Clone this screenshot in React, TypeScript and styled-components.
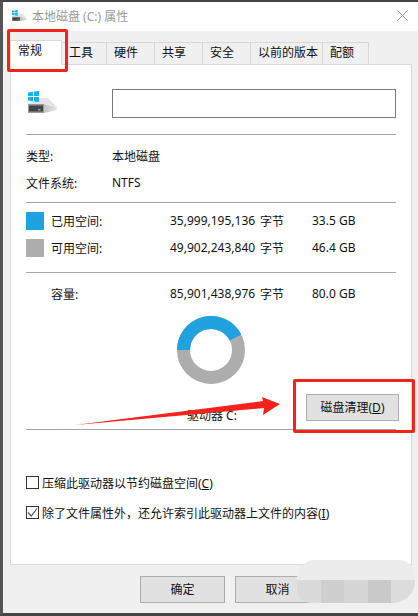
import React from 'react';
import styled, {createGlobalStyle} from 'styled-components';

const GlobalStyle = createGlobalStyle`
  html, body {
    margin: 0;
    padding: 0;
    background: #f0f0f0;
  }
  * {
    box-sizing: border-box;
  }
`;

const tabs = [
    {label: '常规', width: 52},
    {label: '工具', width: 45},
    {label: '硬件', width: 48},
    {label: '共享', width: 48},
    {label: '安全', width: 48},
    {label: '以前的版本', width: 72},
    {label: '配额', width: 46},
];

const DriveIcon = ({size = 29}: {size?: number}) => (
    <svg width={size} height={size * 22 / 29} viewBox="0 0 29 22">
        <defs>
            <linearGradient id="driveSide" x1="0" y1="0" x2="1" y2="0">
                <stop offset="0" stopColor="#c4c4c4"/>
                <stop offset="1" stopColor="#e6e6e6"/>
            </linearGradient>
        </defs>
        <path d="M16 13 L29 16 L29 19 L16 22 Z" fill="url(#driveSide)"/>
        <path d="M0 13 L7 7 L20 7 L29 16 L16 13 Z" fill="#e4e4e4"/>
        <rect x="0" y="13" width="16" height="9" fill="#9a9a9a"/>
        <rect x="1" y="14.5" width="14" height="6" fill="#454545"/>
        <rect x="10" y="18" width="2.5" height="1.5" fill="#5cc46c"/>
        <path d="M0 1.5 L5 0.8 L5 5 L0 5 Z" fill="#1bb0ef"/>
        <path d="M6 0.6 L11 0 L11 5 L6 5 Z" fill="#1bb0ef"/>
        <path d="M0 6 L5 6 L5 10.2 L0 9.6 Z" fill="#1bb0ef"/>
        <path d="M6 6 L11 6 L11 11 L6 10.4 Z" fill="#1bb0ef"/>
    </svg>
);

const Donut = () => (
    <svg width="68" height="68" viewBox="0 0 68 68">
        <circle cx="34" cy="34" r="27.5" fill="none" stroke="#adadad" strokeWidth="13"/>
        <path d="M6.5 34 A27.5 27.5 0 0 1 58.5 21.5" fill="none" stroke="#1fa2dd" strokeWidth="13"/>
    </svg>
);

const App = () => {
    return <Window>
        <GlobalStyle/>
        <TitleBar>
            <DriveIcon size={15}/>
            <TitleText>本地磁盘 (C:) 属性</TitleText>
            <CloseIcon viewBox="0 0 11 11"><path d="M0.5 0.5 L10.5 10.5 M10.5 0.5 L0.5 10.5"/></CloseIcon>
        </TitleBar>

        <TabStrip>
            {tabs.map((tab, i) => <Tab key={tab.label} $active={i === 0} $width={tab.width}>{tab.label}</Tab>)}
        </TabStrip>

        <Panel>
            <IconRow>
                <IconSlot><DriveIcon/></IconSlot>
                <NameInput/>
            </IconRow>
            <Divider $gap={16}/>

            <InfoBlock>
                <InfoRow><span>类型:</span><span>本地磁盘</span></InfoRow>
                <InfoRow><span>文件系统:</span><span>NTFS</span></InfoRow>
            </InfoBlock>
            <Divider $gap={6}/>

            <SpaceBlock>
                <SpaceRow>
                    <Swatch $color="#1fa2dd"/>
                    <span>已用空间:</span>
                    <Bytes>35,999,195,136</Bytes>
                    <span>字节</span>
                    <Size>33.5 GB</Size>
                </SpaceRow>
                <SpaceRow>
                    <Swatch $color="#adadad"/>
                    <span>可用空间:</span>
                    <Bytes>49,902,243,840</Bytes>
                    <span>字节</span>
                    <Size>46.4 GB</Size>
                </SpaceRow>
            </SpaceBlock>
            <Divider $gap={11}/>

            <TotalRow>
                <span/>
                <span>容量:</span>
                <Bytes>85,901,438,976</Bytes>
                <span>字节</span>
                <Size>80.0 GB</Size>
            </TotalRow>

            <DonutWrap><Donut/></DonutWrap>

            <DriveRow>
                <DriveLabel>驱动器 C:</DriveLabel>
                <CleanButton>磁盘清理(<u>D</u>)</CleanButton>
            </DriveRow>
            <Divider $gap={8}/>

            <Checks>
                <CheckRow>
                    <CheckBox/>
                    <span>压缩此驱动器以节约磁盘空间(<u>C</u>)</span>
                </CheckRow>
                <CheckRow>
                    <CheckBox>
                        <svg width="11" height="11" viewBox="0 0 11 11">
                            <path d="M1 5.5 L4.2 9 L10 1.5" fill="none" stroke="#555" strokeWidth="1.2"/>
                        </svg>
                    </CheckBox>
                    <span>除了文件属性外，还允许索引此驱动器上文件的内容(<u>I</u>)</span>
                </CheckRow>
            </Checks>
        </Panel>

        <Footer>
            <DialogButton>确定</DialogButton>
            <DialogButton>取消</DialogButton>
        </Footer>

        {/* 截图上的标注 */}
        <RedBox $left={7} $top={29} $width={61} $height={43}/>
        <RedBox $left={293} $top={379} $width={122} $height={54}/>
        <ArrowOverlay width="213" height="40" viewBox="72 390 213 40">
            <path d="M75 425 L263 401 L262 397 L280 404 L263 415 L264 408 Z" fill="#f2231b"/>
        </ArrowOverlay>
        <Watermark/>
    </Window>;
};

export default App;


const Window = styled.div`
  position: relative;
  width: 418px;
  height: 616px;
  overflow: hidden;
  background: #f0f0f0;
  border-top: 2px solid #444;
  border-left: 3px solid #555;
  border-bottom: 3px solid #444;
  font-family: "Noto Sans", "Noto Sans CJK SC", sans-serif;
  font-size: 12px;
  color: #111;
`;

const TitleBar = styled.div`
  display: flex;
  align-items: center;
  height: 29px;
  padding: 0 10px 2px 9px;
  background: #fff;
`;

const TitleText = styled.div`
  flex: 1;
  margin-left: 5px;
  color: #9a9a9a;
  font-size: 12px;
`;

const CloseIcon = styled.svg`
  width: 11px;
  height: 11px;
  stroke: #9a9a9a;
  stroke-width: 1;
  fill: none;
`;

const TabStrip = styled.div`
  display: flex;
  align-items: flex-end;
  height: 33px;
  padding-left: 7px;
`;

const Tab = styled.div<{$active?: boolean; $width: number}>`
  position: relative;
  z-index: ${p => p.$active ? 1 : 0};
  width: ${p => p.$width}px;
  height: ${p => p.$active ? '25px' : '22px'};
  margin-bottom: ${p => p.$active ? '-1px' : '0'};
  padding-left: 7px;
  background: ${p => p.$active ? '#fff' : '#f0f0f0'};
  border: 1px solid #d9d9d9;
  border-bottom: none;
  border-left-width: ${p => p.$active ? '1px' : '0'};
  white-space: nowrap;
  line-height: 20px;
`;

const Panel = styled.div`
  width: 402px;
  height: 501px;
  margin-left: 7px;
  padding: 24px 15px 0 15px;
  background: #fff;
  border: 1px solid #d9d9d9;
`;

const IconRow = styled.div`
  display: flex;
  gap: 55px;
  padding-left: 2px;
  height: 29px;
`;

const IconSlot = styled.div`
  display: flex;
  margin-top: 2px;
`;

const NameInput = styled.div`
  width: 287px;
  height: 29px;
  border: 1px solid #7a7a7a;
`;

const Divider = styled.div<{$gap: number}>`
  width: 370px;
  height: 1px;
  margin-top: ${p => p.$gap}px;
  background: #a6a6a6;
`;

const InfoBlock = styled.div`
  padding-top: 7px;
`;

const InfoRow = styled.div`
  display: grid;
  grid-template-columns: 86px 1fr;
  align-items: center;
  height: 27px;
`;

const SpaceBlock = styled.div`
  padding-top: 4px;
`;

const SpaceRow = styled.div`
  display: grid;
  grid-template-columns: 25px 119px 90px 52px 1fr;
  align-items: center;
  width: 370px;
  height: 27px;
`;

const TotalRow = styled(SpaceRow)`
  margin-top: 7px;
`;

const Swatch = styled.div<{$color: string}>`
  width: 18px;
  height: 18px;
  background: ${p => p.$color};
`;

const Bytes = styled.span`
  white-space: nowrap;
`;

const Size = styled.span`
  white-space: nowrap;
`;

const DonutWrap = styled.div`
  display: flex;
  justify-content: center;
  width: 370px;
  margin-top: 9px;
`;

const DriveRow = styled.div`
  display: flex;
  align-items: flex-end;
  justify-content: space-between;
  width: 373px;
  height: 37px;
`;

const DriveLabel = styled.div`
  width: 280px;
  margin-bottom: -3px;
  padding-left: 161px;
  white-space: nowrap;
`;

const CleanButton = styled.div`
  width: 93px;
  height: 27px;
  line-height: 25px;
  text-align: center;
  background: #e1e1e1;
  border: 1px solid #adadad;
`;

const Checks = styled.div`
  display: flex;
  flex-direction: column;
  gap: 17px;
  margin-top: 46px;
`;

const CheckRow = styled.div`
  display: flex;
  align-items: center;
  gap: 3px;
  height: 13px;
  white-space: nowrap;
`;

const CheckBox = styled.div`
  display: flex;
  align-items: center;
  justify-content: center;
  width: 13px;
  height: 13px;
  background: #fff;
  border: 1px solid #333;
`;

const Footer = styled.div`
  display: flex;
  gap: 10px;
  padding: 11px 0 0 137px;
`;

const DialogButton = styled.div`
  width: 85px;
  height: 27px;
  line-height: 25px;
  text-align: center;
  background: #e1e1e1;
  border: 1px solid #adadad;
`;

const RedBox = styled.div<{$left: number; $top: number; $width: number; $height: number}>`
  position: absolute;
  left: ${p => p.$left - 3}px;
  top: ${p => p.$top - 2}px;
  width: ${p => p.$width}px;
  height: ${p => p.$height}px;
  border: 3px solid #f2231b;
  border-radius: 2px;
  z-index: 5;
`;

const ArrowOverlay = styled.svg`
  position: absolute;
  left: 69px;
  top: 388px;
  z-index: 5;
`;

const Watermark = styled.div`
  position: absolute;
  left: 294px;
  top: 558px;
  width: 118px;
  height: 43px;
  border-radius: 18px 16px 22px 14px;
  background:
    linear-gradient(180deg, #ececec 0 46%, transparent 46%),
    linear-gradient(90deg, #dadada 0 20%, #cfcfcf 20% 40%, #d6d6d6 40% 60%, #c9c9c9 60% 80%, #dcdcdc 80%);
  z-index: 4;
`;
